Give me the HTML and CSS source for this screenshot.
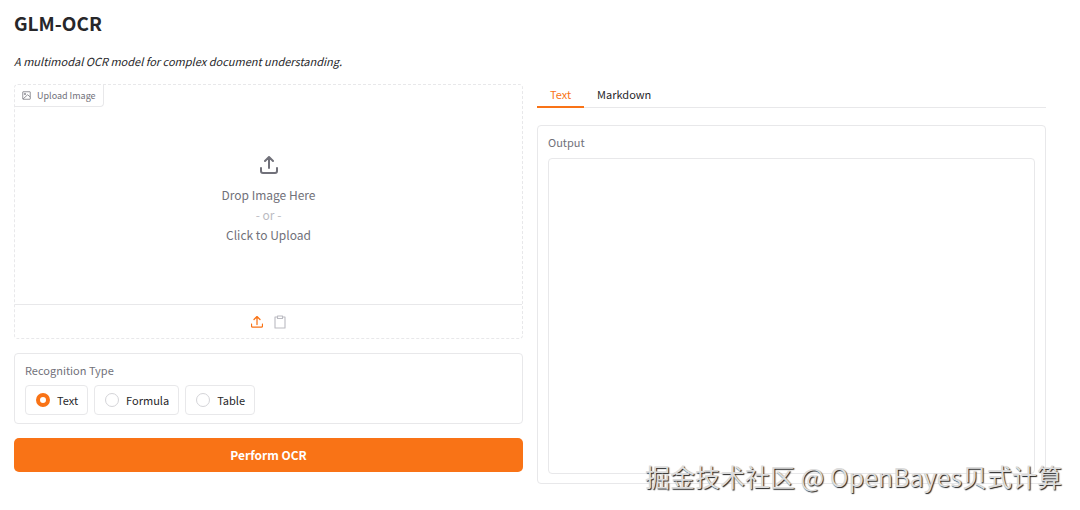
FILE: index.html
```html
<!DOCTYPE html>
<html lang="en">
<head>
  <meta charset="UTF-8" />
  <meta name="viewport" content="width=device-width, initial-scale=1" />
  <title>GLM-OCR</title>
  <link rel="stylesheet" href="styles.css">
</head>
<body>

  <!-- Header -->
  <header class="header">
    <h1>GLM-OCR</h1>
    <p><em>A multimodal OCR model for complex document understanding.</em></p>
  </header>

  <main class="columns">

    <!-- Input column -->
    <form class="column" id="ocrForm">
      <div class="upload">
        <div class="upload-label">
          <svg viewBox="0 0 24 24" width="9" height="9" fill="none" stroke="currentColor" stroke-width="2">
            <rect x="2" y="2" width="20" height="20" rx="1" />
            <circle cx="8" cy="8" r="2" />
            <path d="M3 21L15 10l7 6" />
          </svg>
          <span>Upload Image</span>
        </div>
        <button type="button" class="dropzone">
          <svg viewBox="0 0 18 18" width="18" height="18" fill="none" stroke="currentColor" stroke-width="2" stroke-linecap="round" stroke-linejoin="round">
            <path d="M1 12v3a2 2 0 0 0 2 2h12a2 2 0 0 0 2-2v-3M9 12V1M5 5l4-4 4 4" />
          </svg>
          <span>Drop Image Here</span>
          <span class="or">- or -</span>
          <span>Click to Upload</span>
        </button>
        <div class="sources">
          <button type="button" class="source active" aria-label="Upload file">
            <svg viewBox="0 0 24 24" width="12" height="12" fill="none" stroke="currentColor" stroke-width="2.500" stroke-linecap="round" stroke-linejoin="round">
              <path d="M1 16v4a2 2 0 0 0 2 2h18a2 2 0 0 0 2-2v-4M12 17V2M6 7l6-6 6 6" />
            </svg>
          </button>
          <button type="button" class="source" aria-label="Paste from clipboard">
            <svg viewBox="0 0 24 28" width="12" height="14" fill="none" stroke="currentColor" stroke-width="2.200" stroke-linejoin="round">
              <path d="M7 4H2v22h20V4h-5" />
              <path d="M7 2h10v5H7z" />
            </svg>
          </button>
        </div>
      </div>

      <fieldset class="block">
        <legend class="block-title">Recognition Type</legend>
        <div class="options">
          <label class="option"><input type="radio" name="type" value="text" checked /> <span>Text</span></label>
          <label class="option"><input type="radio" name="type" value="formula" /> <span>Formula</span></label>
          <label class="option"><input type="radio" name="type" value="table" /> <span>Table</span></label>
        </div>
      </fieldset>

      <button type="button" class="primary">Perform OCR</button>
    </form>

    <!-- Result column -->
    <section class="column">
      <div class="tabs" role="tablist">
        <button type="button" class="tab selected" role="tab" aria-selected="true">Text</button>
        <button type="button" class="tab" role="tab" aria-selected="false">Markdown</button>
      </div>
      <div class="block output">
        <label class="block-title" for="output">Output</label>
        <textarea id="output" readonly></textarea>
      </div>
    </section>

  </main>

  <div class="watermark" lang="zh-CN">掘金技术社区 @ OpenBayes贝式计算</div>

</body>
</html>
```
FILE: styles.css
```css
* {
  margin: 0; padding: 0; box-sizing: border-box;
}
body {
  position: relative;
  padding: 12px 34px 25px 14px;
  font-family: "Noto Sans CJK SC", "Noto Sans", sans-serif;
  font-size: 12px;
  line-height: 20px;
  color: #27272a;
  background: #fff;
}
button, input, textarea {
  font: inherit;
  color: inherit;
}
button {
  border: none;
  background: none;
  cursor: pointer;
}
svg {
  display: block;
}
.header h1 {
  font-size: 19px;
  line-height: 22px;
  margin-bottom: 17px;
}
.header p {
  font-size: 11px;
  margin-bottom: 13px;
}
.columns {
  display: flex;
  gap: 14px;
}
.column {
  flex: 1;
  min-width: 0;
  display: flex;
  flex-direction: column;
  gap: 14px;
}
.upload {
  position: relative;
  height: 255px;
  display: flex;
  flex-direction: column;
  border: 1px dashed #e8e8ea;
  border-radius: 4px;
}
.upload-label {
  position: absolute;
  top: 0;
  left: 0;
  display: flex;
  align-items: center;
  gap: 6px;
  padding: 0 7px;
  height: 22px;
  font-size: 9px;
  color: #71717a;
  border: solid #e8e8ea;
  border-width: 0 1px 1px 0;
  border-radius: 4px 0;
}
.dropzone {
  flex: 1;
  display: flex;
  flex-direction: column;
  align-items: center;
  justify-content: center;
  padding-top: 11px;
  color: #71717a;
}
.dropzone svg {
  margin-bottom: 11px;
}
.dropzone .or {
  color: #bbbbc2;
}
.sources {
  display: flex;
  align-items: center;
  justify-content: center;
  gap: 11px;
  height: 34px;
  border-top: 1px solid #e8e8ea;
}
.source {
  color: #bbbbc2;
}
.source.active {
  color: #f97316;
}
.block {
  padding: 6px 10px 8px;
  border: 1px solid #e8e8ea;
  border-radius: 4px;
}
.block-title {
  display: block;
  float: left;
  margin-bottom: 5px;
  font-size: 11px;
  color: #71717a;
}
.options {
  clear: both;
  display: flex;
  gap: 6px;
}
.option {
  display: flex;
  align-items: center;
  gap: 7px;
  height: 30px;
  padding: 0 9px 0 10px;
  font-size: 11px;
  border: 1px solid #e8e8ea;
  border-radius: 4px;
  cursor: pointer;
}
.option input {
  appearance: none;
  width: 14px;
  height: 14px;
  border: 1px solid #d4d4d8;
  border-radius: 50%;
}
.option input:checked {
  border: 4px solid #f97316;
}
.primary {
  height: 34px;
  font-weight: bold;
  color: #fff;
  background: #f97316;
  border-radius: 5px;
}
.tabs {
  display: flex;
  height: 24px;
  margin-bottom: 3px;
  border-bottom: 1px solid #e8e8ea;
}
.tab {
  height: 24px;
  padding: 0 13px 4px;
  font-size: 11px;
}
.tab.selected {
  color: #f97316;
  border-bottom: 2px solid #f97316;
  padding-bottom: 2px;
}
.output {
  flex: 1;
  display: flex;
  flex-direction: column;
  padding-bottom: 9px;
}
.output textarea {
  flex: 1;
  min-height: 316px;
  margin-top: 1px;
  padding: 7px;
  border: 1px solid #e8e8ea;
  border-radius: 4px;
  outline: none;
  resize: none;
}
.watermark {
  position: absolute;
  right: 18px;
  bottom: 15px;
  font-size: 25px;
  line-height: 36px;
  color: #dcdcdc;
  text-shadow: 1px 1px 1px #222;
  white-space: nowrap;
  pointer-events: none;
}
```
